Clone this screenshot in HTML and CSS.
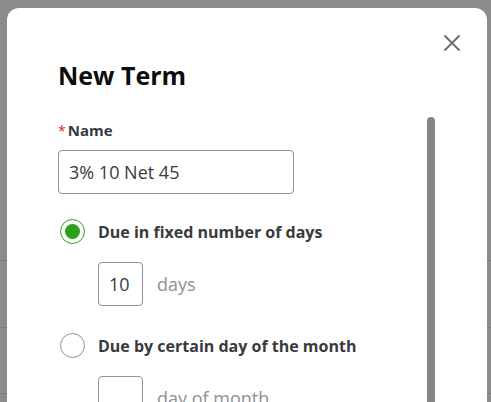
FILE: index.html
```html
<!DOCTYPE html>
<html lang="en">
<head>
<meta charset="utf-8">
<title>New Term</title>
<link rel="stylesheet" href="styles.css">
</head>
<body>
<div class="modal">
  <button class="close" aria-label="Close">
    <svg width="16" height="16" viewBox="0 0 16 16"><path d="M1 1L15 15M15 1L1 15" stroke="#6b6c72" stroke-width="1.8" fill="none" stroke-linecap="round"/></svg>
  </button>
  <h1 class="title">New Term</h1>
  <div class="body">
    <div class="form">
      <div class="field-label"><span class="req">*</span>Name</div>
      <div class="text-input wide">3% 10 Net 45</div>

      <div class="option">
        <span class="radio checked"><span class="dot"></span></span>
        <span class="option-label">Due in fixed number of days</span>
      </div>
      <div class="sub-row">
        <div class="text-input small">10</div>
        <span class="unit">days</span>
      </div>

      <div class="option option-next">
        <span class="radio"></span>
        <span class="option-label">Due by certain day of the month</span>
      </div>
      <div class="sub-row">
        <div class="text-input small"></div>
        <span class="unit">day of month</span>
      </div>
    </div>
    <div class="scrollbar"></div>
  </div>
</div>
</body>
</html>
```

FILE: styles.css
```css
html, body {
  margin: 0;
  height: 100%;
  overflow: hidden;
}
body {
  background-color: #8b8c8d;
  background-image:
    linear-gradient(to bottom, transparent 260px, #7c7d7e 260px, #7c7d7e 261px, transparent 261px),
    linear-gradient(to bottom, transparent 327px, #7c7d7e 327px, #7c7d7e 328px, transparent 328px),
    linear-gradient(to bottom, transparent 393px, #7c7d7e 393px, #7c7d7e 394px, transparent 394px);
  font-family: "Open Sans", "Lato", sans-serif;
  color: #393a3d;
  padding: 8px 4px 0 7px;
  box-sizing: border-box;
}
.modal {
  position: relative;
  background: #fff;
  border-radius: 12px 12px 0 0;
  height: 100%;
  overflow: hidden;
  padding: 0 0 0 51px;
}
.close {
  position: absolute;
  top: 27px;
  right: 27px;
  width: 16px;
  height: 16px;
  padding: 0;
  border: 0;
  background: none;
  display: flex;
}
.title {
  margin: 0;
  padding-top: 51px;
  font-size: 25px;
  font-weight: 700;
  line-height: 32px;
  color: #0d0d0d;
}
.body {
  display: flex;
  margin-top: 26px;
}
.form {
  flex: 1;
  display: flex;
  flex-direction: column;
  align-items: flex-start;
}
.scrollbar {
  width: 8px;
  height: 300px;
  margin-right: 52px;
  background: #858585;
  border-radius: 4px 4px 0 0;
}
.field-label {
  font-size: 15px;
  font-weight: 700;
  line-height: 20px;
  margin-top: 3px;
}
.req {
  color: #d52b1e;
  font-weight: 400;
  margin-right: 2px;
  font-size: 14px;
}
.text-input {
  box-sizing: border-box;
  border: 1px solid #8d9096;
  border-radius: 4px;
  height: 44px;
  font-size: 18px;
  line-height: 42px;
  color: #393a3d;
  background: #fff;
}
.wide {
  width: 236px;
  margin-top: 9px;
  padding-left: 10px;
}
.small {
  width: 45px;
  padding: 0 10px;
}
.option {
  display: flex;
  align-items: center;
  gap: 13px;
  margin-top: 25px;
  margin-left: 2px;
}
.option-next {
  margin-top: 27px;
}
.option-label {
  font-size: 16px;
  font-weight: 700;
  line-height: 20px;
}
.radio {
  box-sizing: border-box;
  width: 25px;
  height: 25px;
  border-radius: 50%;
  border: 1px solid #8d9096;
  display: flex;
  align-items: center;
  justify-content: center;
}
.radio.checked {
  border-color: #2ca01c;
}
.dot {
  width: 15px;
  height: 15px;
  border-radius: 50%;
  background: #2ca01c;
}
.sub-row {
  display: flex;
  align-items: center;
  gap: 14px;
  margin-top: 18px;
  margin-left: 40px;
}
.unit {
  font-size: 18px;
  color: #8d9096;
}
```
